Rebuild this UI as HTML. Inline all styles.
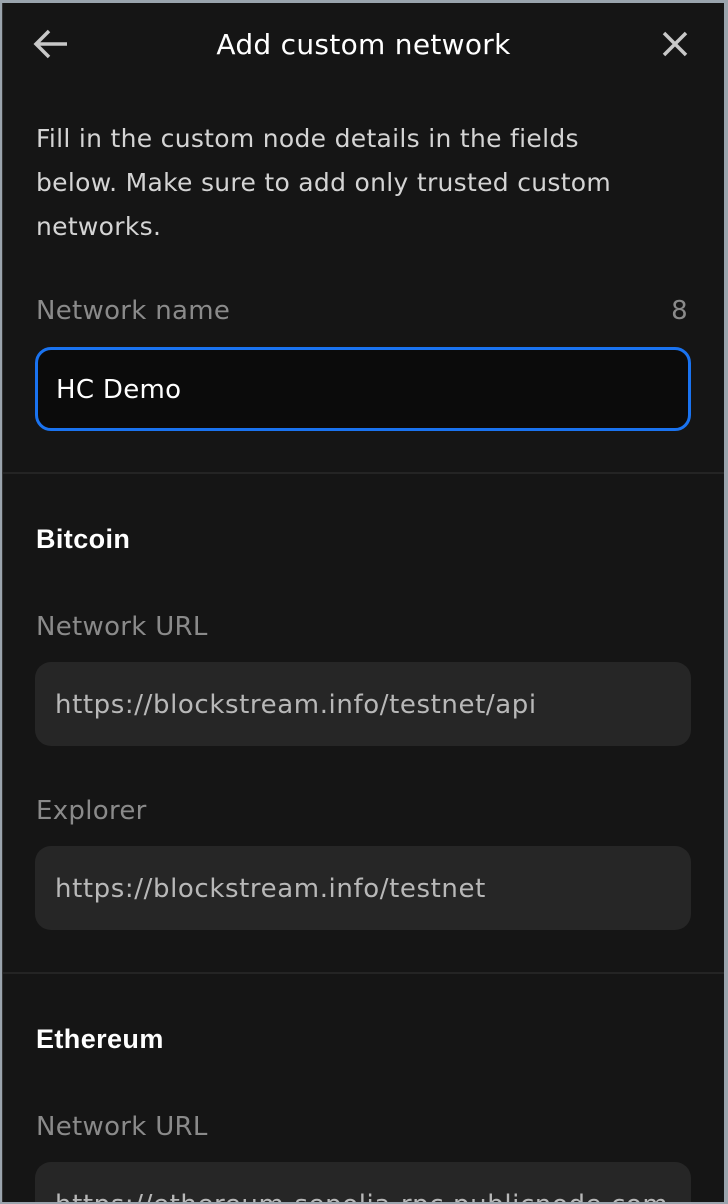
<!DOCTYPE html>
<html><head><meta charset="utf-8"><style>
html,body{margin:0;padding:0;width:728px;height:1204px;overflow:hidden;background:#9aa4ad;font-family:"DejaVu Sans","Liberation Sans",sans-serif;}
.panel{position:absolute;left:2px;top:3px;width:721px;height:1199px;background:#151515;overflow:hidden;border-left:1px solid #333;letter-spacing:0.3px;}
.title{position:absolute;top:25px;left:0;width:721px;text-align:center;color:#fff;font-size:28px;}
.t{position:absolute;left:33px;color:#fff;}
.h{font-family:"Liberation Sans",sans-serif;font-size:27px;font-weight:bold;letter-spacing:0.4px;}
.lbl{position:absolute;left:33px;color:#8a8a8a;font-size:26px;top:1px}
.inp{position:absolute;left:32px;width:656px;height:84px;border-radius:16px;background:#262626;box-sizing:border-box;padding-left:20px;line-height:86px;color:#b8b8b8;font-size:26px;letter-spacing:0.6px;white-space:nowrap;overflow:hidden;}
.hr{position:absolute;left:0;width:721px;height:2px;background:#242424;}
</style></head><body>
<div class="panel">
<svg style="position:absolute;left:30px;top:26px" width="36" height="30" viewBox="0 0 36 30"><path d="M3 15H34M16 2L3 15L16 28" stroke="#c8c8c8" stroke-width="3.5" fill="none"/></svg>
<div class="title">Add custom network</div>
<svg style="position:absolute;left:658px;top:27px" width="28" height="28" viewBox="0 0 28 28"><path d="M3 3L25 25M25 3L3 25" stroke="#c8c8c8" stroke-width="3.5"/></svg>
<div class="t" style="top:114px;font-size:25px;line-height:44px;color:#d4d4d4;width:620px">Fill in the custom node details in the fields below. Make sure to add only trusted custom networks.</div>
<div class="lbl" style="top:293px">Network name</div>
<div style="position:absolute;right:36px;top:293px;color:#8a8a8a;font-size:26px">8</div>
<div class="inp" style="top:344px;background:#0b0b0b;border:3px solid #1a73f0;line-height:80px;color:#fff;padding-left:18px;letter-spacing:0.3px">HC Demo</div>
<div class="hr" style="top:469px"></div>
<div class="t h" style="top:521px">Bitcoin</div>
<div class="lbl" style="top:609px">Network URL</div>
<div class="inp" style="top:659px">https://blockstream.info/testnet/api</div>
<div class="lbl" style="top:793px">Explorer</div>
<div class="inp" style="top:843px">https://blockstream.info/testnet</div>
<div class="hr" style="top:969px"></div>
<div class="t h" style="top:1021px">Ethereum</div>
<div class="lbl" style="top:1109px">Network URL</div>
<div class="inp" style="top:1159px">https://ethereum-sepolia-rpc.publicnode.com</div>
</div>
</body></html>
